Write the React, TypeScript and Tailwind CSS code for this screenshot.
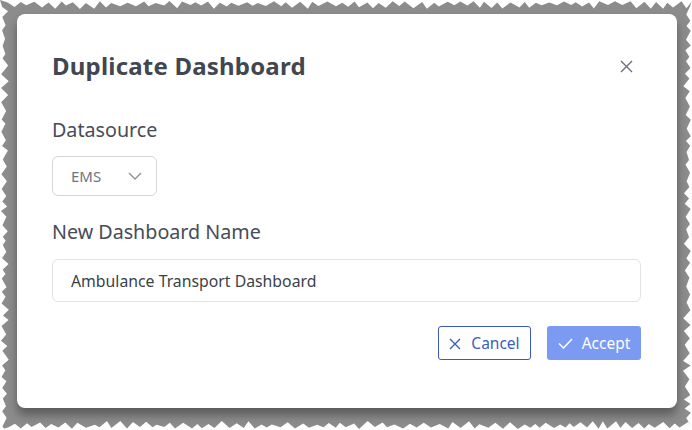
import type { FC } from 'react';

const W = 692;
const H = 430;

// deterministic jitter so the torn edge looks the same every run
const rand = (i: number) => {
    const x = Math.sin(i * 12.9898 + 78.233) * 43758.5453;
    return x - Math.floor(x);
};

const edgePoints = (len: number, seed: number) => {
    const pts: [number, number][] = [];
    let pos = 0;
    let i = 0;
    while (pos < len) {
        const step = 4 + rand(seed + i) * 5;
        const depth = i % 2 === 0 ? 1 + rand(seed + i * 3) * 2 : 5 + rand(seed + i * 7) * 4;
        pos = Math.min(len, pos + step);
        pts.push([pos, depth]);
        i++;
    }
    return pts;
};

const TornEdges: FC = () => {
    const top = edgePoints(W, 1).map(([p, d]) => `${p},${d}`);
    const bottom = edgePoints(W, 50).map(([p, d]) => `${p},${H - d}`);
    const left = edgePoints(H, 100).map(([p, d]) => `${d},${p}`);
    const right = edgePoints(H, 150).map(([p, d]) => `${W - d},${p}`);

    return (
        <svg className="pointer-events-none absolute inset-0" width={W} height={H} viewBox={`0 0 ${W} ${H}`}>
            <polygon fill="#fff" points={`0,0 ${top.join(' ')} ${W},0`} />
            <polygon fill="#fff" points={`0,${H} ${bottom.join(' ')} ${W},${H}`} />
            <polygon fill="#fff" points={`0,0 ${left.join(' ')} 0,${H}`} />
            <polygon fill="#fff" points={`${W},0 ${right.join(' ')} ${W},${H}`} />
        </svg>
    );
};

const App: FC = () => {
    return (
        <div
            className="relative h-[430px] w-[692px] overflow-hidden bg-[#8c8c8c] pl-[17px] pt-[14px]"
            style={{ fontFamily: '"Noto Sans", "Open Sans", sans-serif' }}
        >
            <div className="relative flex h-[394px] w-[660px] flex-col rounded-[8px] bg-white pl-[35px] pr-[36px] pt-[36px] shadow-[0_7px_10px_rgba(0,0,0,0.35)]">
                <div className="flex h-[32px] items-center justify-between">
                    <h2 className="text-[24px] font-bold leading-[32px] tracking-[0.2px] text-[#414651]">
                        Duplicate Dashboard
                    </h2>
                    <button type="button" className="mr-[5px] flex h-[20px] w-[20px] items-center justify-center text-[#6b7078]">
                        <svg width="13" height="13" viewBox="0 0 13 13" fill="none" stroke="currentColor" strokeWidth="1.4">
                            <path d="M1 1l11 11M12 1L1 12" />
                        </svg>
                    </button>
                </div>

                <label className="mt-[35px] text-[19.7px] leading-[26px] text-[#474c58]">Datasource</label>
                <div className="mt-[13px] flex h-[40px] w-[105px] items-center justify-between rounded-[6px] border border-[#d4d6da] pl-[18px] pr-[14px]">
                    <span className="text-[15px] text-[#70757d]">EMS</span>
                    <svg width="14" height="8" viewBox="0 0 14 8" fill="none" stroke="#8a8f96" strokeWidth="1.3">
                        <path d="M1 1l6 6 6-6" />
                    </svg>
                </div>

                <label className="mt-[23px] text-[19.7px] leading-[26px] text-[#474c58]">New Dashboard Name</label>
                <input
                    type="text"
                    defaultValue="Ambulance Transport Dashboard"
                    className="mt-[14px] h-[43px] w-full rounded-[6px] border border-[#e1e3e6] px-[18px] text-[15.8px] text-[#3a3f48] outline-none"
                />

                <div className="mt-[24px] flex justify-end gap-[16px]">
                    <button
                        type="button"
                        className="flex h-[34px] w-[93px] items-center justify-center gap-[10px] rounded-[3px] border border-[#3a59bb] bg-white pt-px text-[15.5px] text-[#3d5cc2]"
                    >
                        <svg width="12" height="12" viewBox="0 0 12 12" fill="none" stroke="currentColor" strokeWidth="1.4">
                            <path d="M1 1l10 10M11 1L1 11" />
                        </svg>
                        Cancel
                    </button>
                    <button
                        type="button"
                        className="flex h-[34px] w-[94px] items-center justify-center gap-[9px] rounded-[3px] bg-[#7b9bf2] pt-px text-[15.5px] text-white"
                    >
                        <svg width="15" height="11" viewBox="0 0 15 11" fill="none" stroke="currentColor" strokeWidth="1.5">
                            <path d="M1 5.5l4.5 4.5L14 1" />
                        </svg>
                        Accept
                    </button>
                </div>
            </div>
            <TornEdges />
        </div>
    );
};

export default App;
